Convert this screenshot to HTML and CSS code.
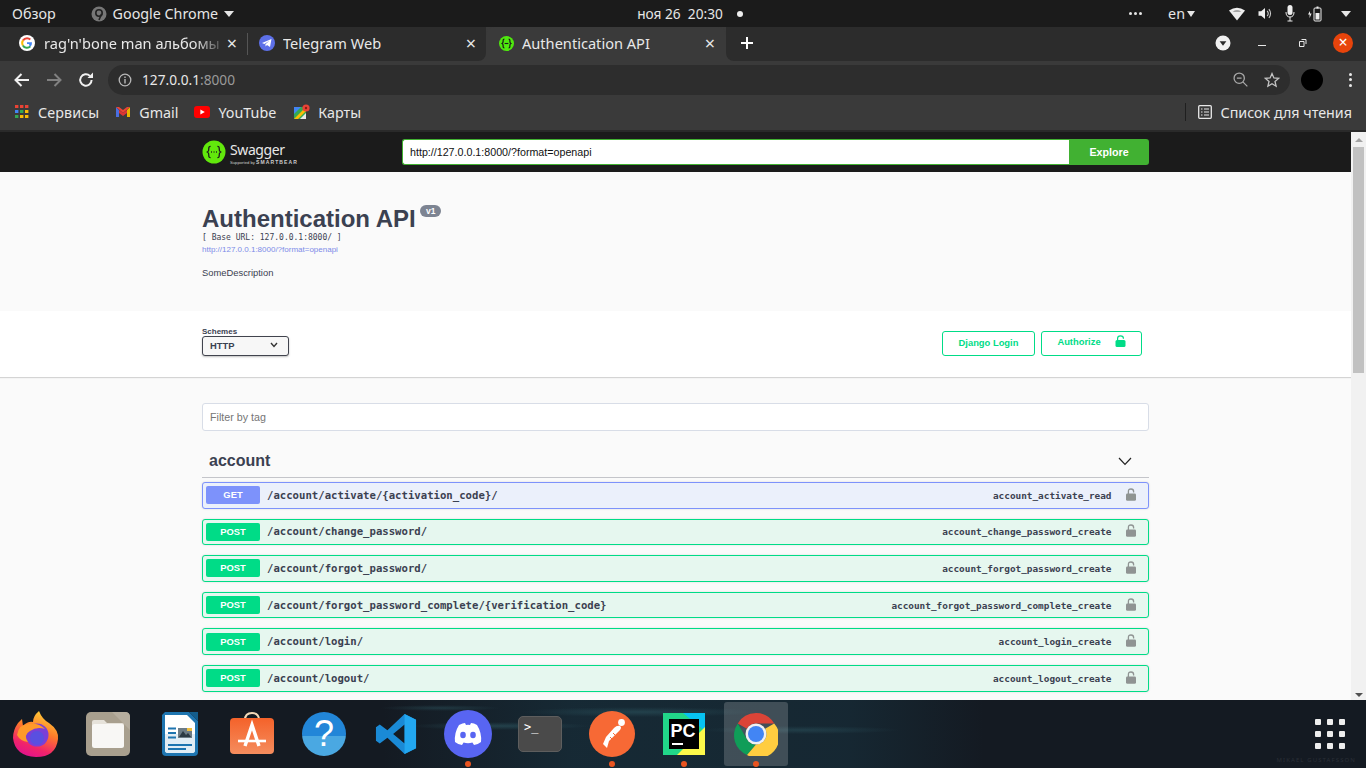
FILE: index.html
```html
<!DOCTYPE html>
<html lang="ru">
<head>
    <meta charset="UTF-8">
    <title>Authentication API</title>
    <link rel="stylesheet" href="styles.css">
</head>
<body>
    <!-- Gnome top bar -->
    <header class="os-bar">
        <div class="os-left">
            <span class="os-overview">Обзор</span>
            <svg class="os-app-icon" width="16" height="16" viewBox="0 0 16 16"><circle cx="8" cy="8" r="7.5" fill="#777"/><circle cx="8" cy="7" r="3.2" fill="none" stroke="#222" stroke-width="1.6"/><path d="M10.5 8 L8 14" stroke="#222" stroke-width="1.6"/></svg>
            <span>Google Chrome</span>
            <span class="tri"></span>
        </div>
        <div class="os-clock">ноя 26&nbsp;&nbsp;20:30<span class="os-dot"></span></div>
        <div class="os-right">
            <span class="os-dots"><i></i><i></i><i></i></span>
            <span class="os-lang">en<span class="tri"></span></span>
            <svg class="os-wifi" width="16" height="14" viewBox="0 0 16 14"><path d="M0 3.5 Q8 -2 16 3.5 L8 13.5 Z" fill="#eee"/><path d="M3.6 4.7 Q8 2 12.4 4.7 L8 4.7 Z" fill="#1b1b1b" opacity=".45"/></svg>
            <svg width="14" height="13" viewBox="0 0 12 12"><path d="M0 4 H2.5 L6 1 V11 L2.5 8 H0 Z" fill="#eee"/><path d="M8 3.5 Q10 6 8 8.5 M9.6 2 Q12.6 6 9.6 10" fill="none" stroke="#ccc"/></svg>
            <svg width="10" height="17" viewBox="0 0 10 17"><rect x="2.5" y="0" width="5" height="10" rx="2.5" fill="#eee"/><path d="M1 7 Q1 12 5 12 Q9 12 9 7 M5 12 V16 M2.5 16 H7.5" fill="none" stroke="#eee"/></svg>
            <svg width="14" height="16" viewBox="0 0 14 16"><path d="M2 5 L0 8.5 H1.6 V12 L3.6 7.5 H2 Z" fill="#eee"/><rect x="6" y="2" width="7" height="13" rx="1" fill="none" stroke="#eee"/><rect x="8.5" y="0.5" width="2" height="2" fill="#eee"/><rect x="7.5" y="7" width="4" height="6.5" fill="#eee"/></svg>
            <span class="tri"></span>
        </div>
    </header>

    <!-- Chrome window -->
    <div class="tab-strip">
        <div class="tab tab-first">
            <svg class="fav" width="16" height="16" viewBox="0 0 16 16"><circle cx="8" cy="8" r="8" fill="#fff"/><path d="M8 3.2 A4.8 4.8 0 0 1 11.3 4.5" fill="none" stroke="#ea4335" stroke-width="2"/><path d="M4 5.4 A4.8 4.8 0 0 1 8 3.2" fill="none" stroke="#ea4335" stroke-width="2"/><path d="M3.9 10.5 A4.8 4.8 0 0 1 4 5.4" fill="none" stroke="#fbbc05" stroke-width="2"/><path d="M11.4 11.4 A4.8 4.8 0 0 1 3.9 10.5" fill="none" stroke="#34a853" stroke-width="2"/><path d="M8 7.2 H13 A5 5 0 0 1 11.4 11.4 L9.8 10 A2.4 2.4 0 0 0 10.4 9 H8 Z" fill="#4285f4"/></svg>
            <span class="tab-title tab-fade">rag'n'bone man альбомы</span>
            <span class="tab-x">×</span>
        </div>
        <div class="tab tab-second">
            <svg class="fav" width="16" height="16" viewBox="0 0 16 16"><circle cx="8" cy="8" r="8" fill="#5d70e8"/><path d="M3 8 L12.5 4 L11 12 L8 10 L6.6 11.4 L6.4 9.2 L10.5 5.8 L5.4 9 Z" fill="#fff"/></svg>
            <span class="tab-title">Telegram Web</span>
            <span class="tab-x">×</span>
        </div>
        <div class="tab tab-active">
            <svg class="fav" width="15" height="15" viewBox="0 0 24 24"><circle cx="12" cy="12" r="12" fill="#4fe80e"/><path d="M8.6 5 Q6.4 5 6.6 8 Q6.8 11 5 12 Q6.8 13 6.6 16 Q6.4 19 8.6 19 M15.4 5 Q17.6 5 17.4 8 Q17.2 11 19 12 Q17.2 13 17.4 16 Q17.6 19 15.4 19" fill="none" stroke="#1b1b1b" stroke-width="2"/><path d="M9 12 H15" stroke="#1b1b1b" stroke-width="1.8"/></svg>
            <span class="tab-title">Authentication API</span>
            <span class="tab-x">×</span>
        </div>
        <div class="tab-rest">
            <svg class="tab-plus" width="14" height="14" viewBox="0 0 14 14"><path d="M7 1 V13 M1 7 H13" stroke="#fff" stroke-width="2"/></svg>
            <div class="win-controls">
                <svg width="16" height="16" viewBox="0 0 16 16"><circle cx="8" cy="8" r="7.5" fill="#f1f1f1"/><path d="M4.6 6.2 H11.4 L8 10.8 Z" fill="#2b2b2b"/></svg>
                <svg class="win-min" width="8" height="8" viewBox="0 0 8 8"><rect y="6" width="8" height="1" fill="#e8e8e8"/></svg>
                <svg class="win-max" width="8" height="8" viewBox="0 0 8 8"><path d="M2.5 0.5 H7 V5 M0.5 2.5 H5 V7.5 H0.5 Z" fill="none" stroke="#e8e8e8"/></svg>
                <span class="win-close">×</span>
            </div>
        </div>
    </div>

    <div class="toolbar">
        <svg class="nav" width="16" height="14" viewBox="0 0 16 14"><path d="M15 7 H2 M7.5 1 L1.5 7 L7.5 13" fill="none" stroke="#f1f1f1" stroke-width="2"/></svg>
        <svg class="nav" width="16" height="14" viewBox="0 0 16 14"><path d="M1 7 H14 M8.5 1 L14.5 7 L8.5 13" fill="none" stroke="#818181" stroke-width="2"/></svg>
        <svg class="nav" width="16" height="16" viewBox="0 0 16 16"><path d="M13.6 8 A5.7 5.7 0 1 1 11.9 3.9" fill="none" stroke="#f1f1f1" stroke-width="2"/><path d="M9.5 6 H15 V0.5 Z" fill="#f1f1f1"/></svg>
        <div class="omnibox">
            <svg width="14" height="14" viewBox="0 0 14 14"><circle cx="7" cy="7" r="5.8" fill="none" stroke="#b8b8b8" stroke-width="1.3"/><path d="M7 6 V10.4 M7 3.6 V5" stroke="#b8b8b8" stroke-width="1.4"/></svg>
            <span class="url"><b>127.0.0.1</b>:8000</span>
            <svg class="omni-zoom" width="15" height="15" viewBox="0 0 14 14"><circle cx="5.8" cy="5.8" r="4.8" fill="none" stroke="#a8a8a8" stroke-width="1.2"/><path d="M3.6 5.8 H8 M9.2 9.2 L13.4 13.4" stroke="#a8a8a8" stroke-width="1.2"/></svg>
            <svg width="16" height="16" viewBox="0 0 16 16"><path d="M8 1.6 L9.9 6 L14.6 6.4 L11 9.5 L12.1 14.2 L8 11.7 L3.9 14.2 L5 9.5 L1.4 6.4 L6.1 6 Z" fill="none" stroke="#c4c4c4" stroke-width="1.3"/></svg>
        </div>
        <span class="avatar"></span>
        <span class="kebab"><i></i><i></i><i></i></span>
    </div>

    <div class="bookmarks">
        <svg width="14" height="14" viewBox="0 0 14 14"><g><rect x="0" y="0" width="3.4" height="3" fill="#ea4335"/><rect x="5" y="0" width="3.4" height="3" fill="#ea4335"/><rect x="10" y="0" width="3.4" height="3" fill="#ea4335"/><rect x="0" y="5" width="3.4" height="3" fill="#4285f4"/><rect x="5" y="5" width="3.4" height="3" fill="#34a853"/><rect x="10" y="5" width="3.4" height="3" fill="#fbbc05"/><rect x="0" y="10" width="3.4" height="3" fill="#34a853"/><rect x="5" y="10" width="3.4" height="3" fill="#fbbc05"/><rect x="10" y="10" width="3.4" height="3" fill="#fbbc05"/></g></svg>
        <span class="bm-label bm-first">Сервисы</span>
        <svg class="bm-icon" width="16" height="12" viewBox="0 0 16 12"><path d="M1 1 V11 H4 V4 Z" fill="#4a6ee0"/><path d="M15 1 V11 H12 V4 Z" fill="#e8b400"/><path d="M1 1 L8 7 L15 1 L12 1 L8 4 L4 1 Z" fill="#ea4335"/><path d="M4 4 L8 7 L12 4 V7 L8 10 L4 7 Z" fill="#d33"/></svg>
        <span class="bm-label">Gmail</span>
        <svg class="bm-icon" width="16" height="12" viewBox="0 0 16 12"><rect width="16" height="12" rx="3" fill="#f00"/><path d="M6.4 3.4 L10.8 6 L6.4 8.6 Z" fill="#fff"/></svg>
        <span class="bm-label">YouTube</span>
        <svg class="bm-icon bm-maps" width="16" height="16" viewBox="0 0 16 16"><rect y="3" width="12" height="12" fill="#34a853"/><path d="M0 3 H7 L0 10 Z" fill="#4285f4"/><path d="M0 15 L12 3 V7 L4 15 Z" fill="#fbbc05"/><path d="M6 15 L12 9 V15 Z" fill="#e8e8e8"/><circle cx="12" cy="4" r="3.6" fill="#ea4335"/><circle cx="12" cy="4" r="1.2" fill="#8c1c13"/></svg>
        <span class="bm-label">Карты</span>
        <span class="bm-sep"></span>
        <svg width="14" height="14" viewBox="0 0 14 14"><rect x="0.7" y="0.7" width="12.6" height="12.6" rx="1" fill="none" stroke="#e8e8e8" stroke-width="1.3"/><path d="M3 4 H4.5 M6 4 H11 M3 7 H4.5 M6 7 H11 M3 10 H4.5 M6 10 H11" stroke="#e8e8e8" stroke-width="1.2"/></svg>
        <span class="bm-label">Список для чтения</span>
    </div>

    <!-- Page viewport -->
    <div class="viewport">
        <main class="page">
            <div class="sw-topbar">
                <div class="sw-wrap sw-topbar-row">
                    <div class="sw-logo">
                        <svg width="24" height="24" viewBox="0 0 24 24"><circle cx="12" cy="12" r="11.5" fill="#62e80c"/><path d="M8.6 6.4 Q6.6 6.4 6.8 8.6 Q7 11.2 5.4 12 Q7 12.8 6.8 15.4 Q6.6 17.6 8.6 17.6 M15.4 6.4 Q17.4 6.4 17.2 8.6 Q17 11.2 18.6 12 Q17 12.8 17.2 15.4 Q17.4 17.6 15.4 17.6" fill="none" stroke="#1b1b1b" stroke-width="1.3"/><path d="M9 12 H9.9 M11.6 12 H12.5 M14.1 12 H15" stroke="#1b1b1b" stroke-width="1.4"/></svg>
                        <div class="sw-logo-text">
                            <span class="sw-name">Swagger</span>
                            <span class="sw-by">Supported by <b>SMARTBEAR</b></span>
                        </div>
                    </div>
                    <div class="sw-search">
                        <input class="sw-url" value="http://127.0.0.1:8000/?format=openapi">
                        <button class="sw-explore">Explore</button>
                    </div>
                </div>
            </div>

            <section class="info">
                <div class="sw-wrap">
                    <h2 class="info-title">Authentication API <span class="version">v1</span></h2>
                    <div class="base-url">[ Base URL: 127.0.0.1:8000/ ]</div>
                    <a class="spec-link">http://127.0.0.1:8000/?format=openapi</a>
                    <p class="info-desc">SomeDescription</p>
                </div>
            </section>

            <section class="schemes">
                <div class="sw-wrap schemes-row">
                    <div class="schemes-pick">
                        <label class="schemes-label">Schemes</label>
                        <div class="schemes-select">HTTP
                            <svg width="8" height="6" viewBox="0 0 8 6"><path d="M1 1 L4 4.4 L7 1" fill="none" stroke="#333" stroke-width="1.4"/></svg>
                        </div>
                    </div>
                    <div class="auth-btns">
                        <button class="btn-auth btn-django">Django Login</button>
                        <button class="btn-auth btn-authorize"><span>Authorize</span>
                            <svg width="11" height="12" viewBox="0 0 11 12"><path d="M2.6 5 V3.2 Q2.6 0.8 5.5 0.8 Q8.4 0.8 8.4 3.2 V3.8" fill="none" stroke="#00dc87" stroke-width="1.2"/><rect x="0.5" y="5" width="10" height="7" rx="1.5" fill="#00dc87"/></svg>
                        </button>
                    </div>
                </div>
            </section>

            <section class="ops">
                <div class="sw-wrap">
                    <input class="filter" placeholder="Filter by tag">
                    <div class="tag-head">
                        <h3 class="tag-name">account</h3>
                        <svg width="14" height="9" viewBox="0 0 14 9"><path d="M1 1 L7 7.4 L13 1" fill="none" stroke="#222" stroke-width="1.2"/></svg>
                    </div>
                    <div id="opList"></div>
                </div>
            </section>
        </main>
        <div class="scrollbar">
            <span class="sb-arrow sb-up"></span>
            <div class="sb-track"><div class="sb-thumb"></div></div>
            <span class="sb-arrow sb-down"></span>
        </div>
    </div>

    <!-- Ubuntu dock -->
    <footer class="dock">
        <div class="dock-slot">
            <svg width="46" height="46" viewBox="0 0 46 46"><defs><linearGradient id="ff" x1="0.8" y1="0" x2="0.4" y2="1"><stop offset="0" stop-color="#ffd93a"/><stop offset=".45" stop-color="#ff7a2a"/><stop offset=".8" stop-color="#f0246a"/><stop offset="1" stop-color="#e3148a"/></linearGradient></defs><path d="M26 0 Q29 8 36 12 Q46 19 45 28 Q43 46 23 46 Q2 45 0 27 Q0 19 5 12 L9 8 L10 15 Q15 10 20 11 Q20 5 26 0 Z" fill="url(#ff)"/><circle cx="24" cy="24" r="11.5" fill="#7b3fd6"/><circle cx="24" cy="27" r="7" fill="#5a4fe0"/><path d="M4 24 Q6 12 17 13 Q26 12 32 18 Q24 15 17 20 Q10 24 15 31 Q7 30 4 24 Z" fill="#ff9a2a"/></svg>
        </div>
        <div class="dock-slot">
            <svg width="44" height="44" viewBox="0 0 44 44"><rect width="44" height="44" rx="5" fill="#a89f8e"/><path d="M26 0 H39 Q44 0 44 5 V18 Z" fill="#b5ad9e"/><path d="M6 10 Q6 8 8 8 H18 L21 11 H36 Q38 11 38 13 V16 H6 Z" fill="#e6e2da"/><rect x="6" y="12" width="32" height="24" rx="2.5" fill="#f8f7f5"/></svg>
        </div>
        <div class="dock-slot">
            <svg width="36" height="44" viewBox="0 0 36 44"><path d="M3 0 H27 L36 9 V40 Q36 44 32 44 H4 Q0 44 0 40 V3 Z" fill="#1e75b0"/><path d="M3 3 H25 L33 11 V38 Q33 41 30 41 H6 Q3 41 3 38 Z" fill="#fff"/><path d="M3 22 H33 V38 Q33 41 30 41 H6 Q3 41 3 38 Z" fill="#e1edf5"/><path d="M27 0 L36 0 L36 9 Z" fill="#145d8c"/><path d="M6 16.5 H14 M6 21 H14 M6 25.5 H14 M6 33 H30 M6 37 H24" stroke="#1e75b0" stroke-width="2"/><rect x="16" y="16" width="14" height="10" fill="#6d7c86"/><path d="M17 25 L21 19 L24 23 L26 21 L29 25 Z" fill="#2c3a44"/><rect x="25" y="16" width="5" height="3" fill="#f0c040"/></svg>
        </div>
        <div class="dock-slot">
            <svg width="44" height="44" viewBox="0 0 44 44"><defs><linearGradient id="store" x1="0" y1="0" x2="0" y2="1"><stop offset="0" stop-color="#f4622a"/><stop offset="1" stop-color="#f58d5e"/></linearGradient></defs><path d="M15 8 Q15 1 22 1 Q29 1 29 8" fill="none" stroke="#f2d9b8" stroke-width="2"/><rect y="6" width="44" height="36" rx="4" fill="url(#store)"/><path d="M15 34 L22 13 L29 34" fill="none" stroke="#fff" stroke-width="3.4"/><path d="M8 29 H36" stroke="#fff" stroke-width="2.6"/></svg>
        </div>
        <div class="dock-slot">
            <div class="help-icon">?</div>
        </div>
        <div class="dock-slot">
            <svg width="42" height="42" viewBox="0 0 44 44"><path d="M31 1 L43 7 V37 L31 43 L13 26 L5 32 L1 29 V15 L5 12 L13 18 Z M31 12 L19 22 L31 32 Z" fill="#1a8ad6" fill-rule="evenodd"/><path d="M31 1 L43 7 V37 L31 43 Z" fill="#22a7f0"/></svg>
        </div>
        <div class="dock-slot dock-open">
            <svg width="48" height="48" viewBox="0 0 48 48"><circle cx="24" cy="24" r="24" fill="#5865f2"/><path d="M15 15 Q19 13 21 13 L22 15 Q24 14.7 26 15 L27 13 Q30 13 33 15 Q38 23 37 32 Q34 34.5 30 35 L28.4 32.6 Q24 34 19.6 32.6 L18 35 Q14 34.5 11 32 Q10 23 15 15 Z" fill="#fff"/><ellipse cx="19" cy="25" rx="2.8" ry="3.2" fill="#5865f2"/><ellipse cx="29" cy="25" rx="2.8" ry="3.2" fill="#5865f2"/></svg>
        </div>
        <div class="dock-slot">
            <div class="term-icon">&gt;_</div>
        </div>
        <div class="dock-slot dock-open">
            <svg width="46" height="46" viewBox="0 0 46 46"><circle cx="23" cy="23" r="23" fill="#f76935"/><circle cx="32.5" cy="11.5" r="3.4" fill="#fff"/><path d="M10 37 L14 33 L18 37 L20 30 L31 19 Q33 16 31 15 Q28 14 25 17 L17 26 L14 33 Z" fill="#fff"/><path d="M21 26 L24 29 M24 22 L27 25" stroke="#f76935" stroke-width="1"/></svg>
        </div>
        <div class="dock-slot dock-open">
            <svg width="42" height="42" viewBox="0 0 42 42"><rect width="42" height="42" fill="#21d789"/><path d="M20 0 H42 V18 Z" fill="#07c3f2"/><path d="M42 14 V42 H14 Z" fill="#fcf84a"/><rect x="6" y="6" width="30" height="30" fill="#000"/><rect x="9" y="30" width="11" height="2" fill="#fff"/><text x="7.5" y="24" class="pc-text">PC</text></svg>
        </div>
        <div class="dock-slot dock-open dock-active">
            <svg width="44" height="44" viewBox="0 0 44 44"><path d="M22 1 A21 21 0 0 1 40.2 11.5 L22 11.5 A10.5 10.5 0 0 0 12.9 16.8 L3.8 11.5 A21 21 0 0 1 22 1 Z" fill="#db4437"/><path d="M3.8 11.5 L12.9 27.3 A10.5 10.5 0 0 0 22 32.5 L13 42.9 A21 21 0 0 1 3.8 11.5 Z" fill="#0f9d58"/><path d="M40.2 11.5 A21 21 0 0 1 13 42.9 L22 32.5 A10.5 10.5 0 0 0 31.1 16.8 Z" fill="#ffcd40"/><circle cx="22" cy="22" r="10.5" fill="#f1f1f1"/><circle cx="22" cy="22" r="8" fill="#4285f4"/></svg>
        </div>
        <div class="dock-grid"><i></i><i></i><i></i><i></i><i></i><i></i><i></i><i></i><i></i></div>
        <span class="wall-credit">MIKAEL GUSTAFSSON</span>
    </footer>

    <script>
        const ops = [
            ['GET', '/account/activate/{activation_code}/', 'account_activate_read'],
            ['POST', '/account/change_password/', 'account_change_password_create'],
            ['POST', '/account/forgot_password/', 'account_forgot_password_create'],
            ['POST', '/account/forgot_password_complete/{verification_code}', 'account_forgot_password_complete_create'],
            ['POST', '/account/login/', 'account_login_create'],
            ['POST', '/account/logout/', 'account_logout_create']
        ];
        const lock = '<svg width="10" height="13" viewBox="0 0 10 13"><path d="M2.4 6 V3.4 Q2.4 1 5 1 Q7.6 1 7.6 3.4 V4.4" fill="none" stroke="#8f9493" stroke-width="1.3"/><rect y="5.4" width="10" height="7.4" rx="1.4" fill="#8f9493"/></svg>';
        const opList = document.getElementById('opList');

        ops.forEach(function(op) {
            const row = document.createElement('div');
            row.className = 'op op-' + op[0].toLowerCase();
            row.innerHTML = '<span class="op-method">' + op[0] + '</span>' +
                '<span class="op-path">' + op[1] + '</span>' +
                '<span class="op-id">' + op[2] + '</span>' + lock;
            opList.appendChild(row);
        });
    </script>
</body>
</html>
```

FILE: styles.css
```css
* {
    box-sizing: border-box;
}

html, body {
    margin: 0;
    height: 768px;
    overflow: hidden;
}

body {
    display: flex;
    flex-direction: column;
    width: 1366px;
    font-family: 'Noto Sans', sans-serif;
    background: #111;
}

/* Gnome top bar */
.os-bar {
    height: 27px;
    background: #1b1b1b;
    color: #e6e6e6;
    font-size: 14.3px;
    display: grid;
    grid-template-columns: 1fr auto 1fr;
    align-items: center;
    padding: 0 15px 0 12px;
}

.os-left, .os-right {
    display: flex;
    align-items: center;
}

.os-overview {
    margin-right: 35px;
}

.os-app-icon {
    margin-right: 6px;
}

.tri {
    display: inline-block;
    width: 0;
    height: 0;
    margin-left: 6px;
    border-left: 5px solid transparent;
    border-right: 5px solid transparent;
    border-top: 6px solid #e6e6e6;
}

.os-clock {
    display: flex;
    align-items: center;
    padding-left: 17px;
    font-size: 13.7px;
}

.os-dot {
    width: 6px;
    height: 6px;
    margin-left: 14px;
    border-radius: 50%;
    background: #eee;
}

.os-right {
    justify-content: flex-end;
    gap: 13px;
}

.os-dots {
    display: flex;
    gap: 1.5px;
    margin-right: 13px;
}

.os-dots i {
    width: 3.5px;
    height: 3.5px;
    border-radius: 50%;
    background: #e6e6e6;
}

.os-lang {
    margin-right: 21px;
}

.os-lang .tri {
    margin-left: 2px;
    vertical-align: 2px;
    border-left-width: 4.5px;
    border-right-width: 4.5px;
}

/* Tabs */
.tab-strip {
    height: 34px;
    display: flex;
    background: #3a3a3a;
    color: #e8e8e8;
    font-size: 14.6px;
}

.tab {
    position: relative;
    display: flex;
    align-items: center;
    padding: 0 10px 2px 11px;
    background: #2c2c2c;
}

.tab-first {
    width: 248px;
    padding-left: 19px;
    padding-right: 11px;
}

.tab-second {
    width: 238px;
    border-bottom-right-radius: 8px;
}

/* thin divider between the two background tabs */
.tab-second::before {
    content: '';
    position: absolute;
    left: -1px;
    top: 6px;
    width: 1px;
    height: 22px;
    background: #555;
}

.tab-active {
    width: 240px;
    background: #3a3a3a;
    border-radius: 8px 8px 0 0;
    padding-left: 13px;
    padding-right: 11px;
}

.tab-title {
    flex: 1;
    margin-left: 8px;
    overflow: hidden;
    white-space: nowrap;
}

.tab-first .tab-title {
    margin-left: 9px;
}

.tab-fade {
    -webkit-mask-image: linear-gradient(90deg, #000 82%, transparent);
    mask-image: linear-gradient(90deg, #000 82%, transparent);
}

.tab-x {
    font-size: 18px;
    line-height: 1;
}

.tab-rest {
    flex: 1;
    display: flex;
    align-items: center;
    padding-bottom: 2px;
    background: #2c2c2c;
    border-bottom-left-radius: 8px;
}

.tab-plus {
    margin-left: 14px;
}

.win-controls {
    margin-left: auto;
    display: flex;
    align-items: center;
    padding-right: 13px;
}

.win-min {
    margin-left: 27px;
}

.win-max {
    margin-left: 33px;
}

.win-close {
    width: 20px;
    height: 20px;
    margin-left: 26px;
    border-radius: 50%;
    background: #e8440b;
    color: #fff;
    font-size: 16px;
    line-height: 19px;
    text-align: center;
}

/* Address bar */
.toolbar {
    height: 35px;
    display: flex;
    align-items: center;
    background: #3a3a3a;
    padding: 2px 0 0 14px;
}

.nav {
    margin-right: 16px;
}

.omnibox {
    width: 1182px;
    height: 30px;
    margin-left: -2px;
    display: flex;
    align-items: center;
    gap: 12px;
    padding: 0 10px;
    background: #2d2d2d;
    border-radius: 15px;
}

.url {
    margin-left: -2px;
    font-size: 13.7px;
    color: #9a9a9a;
}

.url b {
    font-weight: 400;
    color: #e8e8e8;
}

.omni-zoom {
    margin-left: auto;
    margin-right: 4px;
}

.avatar {
    width: 22px;
    height: 22px;
    margin-left: 11px;
    border-radius: 50%;
    background: #000;
}

.kebab {
    display: flex;
    flex-direction: column;
    gap: 2.5px;
    margin-left: 26px;
}

.kebab i {
    width: 3px;
    height: 3px;
    border-radius: 50%;
    background: #e8e8e8;
}

/* Bookmarks */
.bookmarks {
    height: 34px;
    display: flex;
    align-items: center;
    background: #3a3a3a;
    color: #e8e8e8;
    font-size: 14.3px;
    padding: 0 0 2px 15px;
}

.bm-label {
    margin-left: 8px;
}

.bm-first {
    margin-left: 9px;
    letter-spacing: 0.1px;
}

.bm-icon {
    margin-left: 16px;
}

.bm-maps {
    margin-left: 18px;
}

.bm-sep {
    width: 1px;
    height: 18px;
    margin-left: auto;
    margin-right: 12px;
    background: #1f1f1f;
}

.bookmarks .bm-label:last-child {
    margin-right: 14px;
}

/* Page */
.viewport {
    height: 570px;
    display: flex;
    border-top: 2px solid #2a2a2a;
}

.page {
    flex: 1;
    background: #fafafa;
    color: #3b4151;
    font-family: 'Liberation Sans', sans-serif;
    overflow: hidden;
}

.sw-wrap {
    width: 947px;
    margin-left: 202px;
}

.sw-topbar {
    height: 40px;
    background: #1b1b1b;
}

.sw-topbar-row {
    height: 40px;
    display: flex;
    align-items: center;
}

.sw-logo {
    width: 200px;
    display: flex;
    align-items: center;
    gap: 4px;
}

.sw-logo-text {
    display: flex;
    flex-direction: column;
    padding-top: 4px;
    color: #fff;
}

.sw-name {
    font-family: 'Noto Sans', sans-serif;
    font-size: 14px;
    line-height: 14px;
    letter-spacing: -0.4px;
    color: #e8e8e8;
}

.sw-by {
    margin-top: 2px;
    font-size: 4.2px;
    line-height: 6px;
    color: #ccc;
    white-space: nowrap;
}

.sw-by b {
    font-size: 5px;
    letter-spacing: 1.1px;
}

.sw-search {
    flex: 1;
    height: 26px;
    display: flex;
}

.sw-url {
    flex: 1;
    height: 26px;
    padding: 0 7px;
    border: 1px solid #41b132;
    border-right: none;
    border-radius: 3px 0 0 3px;
    outline: none;
    background: #fff;
    color: #111;
    font-family: 'Liberation Sans', sans-serif;
    font-size: 10.7px;
}

.sw-explore {
    width: 80px;
    border: none;
    border-radius: 0 3px 3px 0;
    background: #41b132;
    color: #fff;
    font-family: 'Liberation Sans', sans-serif;
    font-size: 10.7px;
    font-weight: 700;
}

.info {
    height: 139px;
    padding-top: 33px;
}

.info-title {
    height: 28px;
    margin: 0;
    font-size: 24px;
    line-height: 28px;
    font-weight: 700;
    color: #3b4151;
}

.version {
    display: inline-block;
    height: 12px;
    padding: 0 5.5px;
    border-radius: 6px;
    background: #7d8492;
    color: #fff;
    font-size: 8.5px;
    line-height: 12px;
    vertical-align: 13px;
    margin-left: -2px;
}

.base-url {
    margin-top: 0;
    font-family: 'DejaVu Sans Mono', monospace;
    font-size: 8px;
    line-height: 10px;
}

.spec-link {
    display: block;
    margin-top: 2px;
    color: #7d8be8;
    font-size: 8px;
    line-height: 10px;
}

.info-desc {
    margin: 12px 0 0;
    font-size: 9.4px;
    line-height: 12px;
}

.schemes {
    height: 66px;
    background: #fff;
    box-shadow: 0 1px 1px rgba(0, 0, 0, 0.15);
    position: relative;
}

.schemes-row {
    height: 66px;
    display: flex;
    justify-content: space-between;
    padding: 16px 7px 0 0;
}

.schemes-label {
    display: block;
    font-size: 8px;
    font-weight: 700;
    line-height: 9px;
}

.schemes-select {
    width: 87px;
    height: 20px;
    display: flex;
    align-items: center;
    justify-content: space-between;
    padding: 0 10px 2px 7px;
    border: 1px solid #41444e;
    border-radius: 3px;
    background: #f7f7f7;
    box-shadow: 0 1px 2px rgba(0, 0, 0, 0.25);
    font-size: 9.4px;
    font-weight: 700;
}

.auth-btns {
    display: flex;
    gap: 6px;
    padding-top: 4px;
}

.btn-auth {
    height: 25px;
    display: flex;
    align-items: center;
    justify-content: center;
    padding: 0 0 2px;
    border: 1px solid #00dc87;
    border-radius: 3px;
    background: #fff;
    color: #00dc87;
    font-family: 'Liberation Sans', sans-serif;
    font-size: 9.4px;
    font-weight: 700;
}

.btn-django {
    width: 93px;
}

.btn-authorize {
    width: 101px;
    gap: 14px;
}

.btn-authorize span {
    margin-top: -2px;
}

.btn-authorize svg {
    margin-bottom: 3px;
}

.ops {
    padding-top: 26px;
}

.filter {
    display: block;
    width: 100%;
    height: 28px;
    padding: 0 7px;
    border: 1px solid #d8dde7;
    border-radius: 3px;
    outline: none;
    background: #fff;
    font-family: 'Liberation Sans', sans-serif;
    font-size: 10.7px;
}

.tag-head {
    height: 47px;
    margin-bottom: 4px;
    display: flex;
    align-items: center;
    justify-content: space-between;
    padding: 14px 17px 0 7px;
    border-bottom: 1px solid #c4c5ca;
}

.tag-name {
    margin: 0;
    font-size: 16px;
    font-weight: 700;
}

.op {
    height: 26.6px;
    margin-bottom: 10px;
    display: flex;
    align-items: center;
    padding: 0 12px 0 3px;
    border: 1px solid;
    border-radius: 3px;
    box-shadow: 0 0 2px rgba(0, 0, 0, 0.15);
}

.op svg {
    margin-left: 15px;
    margin-bottom: 2px;
}

.op-get {
    border-color: #7d92fb;
    background: #ebf0fb;
}

.op-post {
    border-color: #00dc87;
    background: #e6f7ef;
}

.op-method {
    width: 54px;
    height: 18px;
    border-radius: 2px;
    color: #fff;
    font-size: 9.4px;
    font-weight: 700;
    line-height: 18px;
    text-align: center;
}

.op-get .op-method {
    background: #7d92fb;
}

.op-post .op-method {
    background: #00dc87;
}

.op-path {
    margin-left: 7px;
    font-family: 'DejaVu Sans Mono', monospace;
    font-size: 10.65px;
    font-weight: 700;
}

.op-id {
    margin-left: auto;
    margin-right: -0.5px;
    font-family: 'DejaVu Sans Mono', monospace;
    font-size: 9.4px;
    font-weight: 700;
}

.scrollbar {
    width: 15px;
    display: flex;
    flex-direction: column;
    background: #f1f1f1;
}

.sb-arrow {
    width: 0;
    height: 0;
    margin: 6px auto 5px;
    border-left: 4px solid transparent;
    border-right: 4px solid transparent;
}

.sb-up {
    border-bottom: 4px solid #a3a3a3;
}

.sb-down {
    margin: 5px auto 3px;
    border-top: 4px solid #505050;
}

.sb-track {
    flex: 1;
}

.sb-thumb {
    width: 11px;
    height: 226px;
    margin-left: 2px;
    background: #c1c1c1;
}

/* Dock */
.dock {
    height: 68px;
    position: relative;
    display: flex;
    align-items: center;
    background:
        radial-gradient(ellipse 90px 4px at 500px 26px, rgba(50, 95, 105, 0.5), transparent),
        radial-gradient(ellipse 120px 5px at 640px 12px, rgba(50, 95, 105, 0.45), transparent),
        radial-gradient(ellipse 100px 4px at 800px 30px, rgba(50, 95, 105, 0.4), transparent),
        radial-gradient(ellipse 60px 3px at 440px 8px, rgba(50, 95, 105, 0.4), transparent),
        linear-gradient(90deg, transparent 28%, rgba(25, 60, 75, 0.45) 42%, rgba(25, 60, 75, 0.4) 62%, transparent 72%),
        #141a22;
}

.dock-slot {
    width: 72px;
    height: 64px;
    position: relative;
    display: flex;
    align-items: center;
    justify-content: center;
    flex: none;
}

.dock-open::after {
    content: '';
    position: absolute;
    left: 50%;
    bottom: -1px;
    width: 6px;
    height: 6px;
    margin-left: -3px;
    border-radius: 50%;
    background: #e95420;
}

.dock-active {
    width: 64px;
    margin-left: 4px;
    border-radius: 3px;
    background: rgba(255, 255, 255, 0.18);
}

.help-icon {
    width: 44px;
    height: 44px;
    border-radius: 50%;
    background: linear-gradient(#2286d8 55%, #4aa8e2 55%);
    color: #fff;
    font-family: 'Liberation Sans', sans-serif;
    font-size: 36px;
    line-height: 44px;
    text-align: center;
}

.term-icon {
    width: 44px;
    height: 36px;
    padding: 3px 5px;
    border: 1px solid #5e5e5e;
    border-radius: 5px;
    background: #4a4a4a;
    color: #fff;
    font-family: 'DejaVu Sans Mono', monospace;
    font-size: 12px;
    line-height: 14px;
}

.pc-text {
    font-family: 'Liberation Sans', sans-serif;
    font-size: 18px;
    font-weight: 700;
    fill: #fff;
}

.dock-grid {
    margin-left: auto;
    margin-right: 21px;
    display: grid;
    grid-template-columns: repeat(3, 6px);
    gap: 6px;
}

.dock-grid i {
    height: 6px;
    border-radius: 1px;
    background: #eee;
}

.wall-credit {
    position: absolute;
    right: 10px;
    bottom: 4px;
    color: #2a2f37;
    font-size: 6px;
    letter-spacing: 1.1px;
}
```
